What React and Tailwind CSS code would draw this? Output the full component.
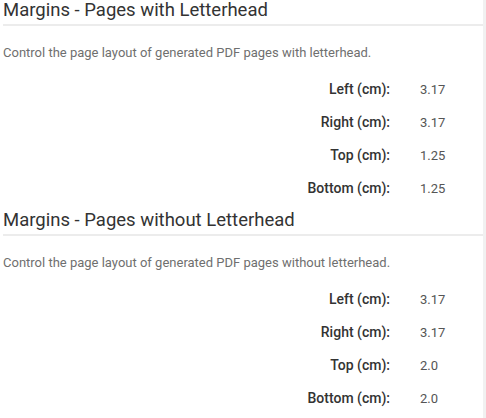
import React from 'react'

const sections = [
  {
    title: 'Margins - Pages with Letterhead',
    desc: 'Control the page layout of generated PDF pages with letterhead.',
    rows: [
      ['Left (cm):', '3.17'],
      ['Right (cm):', '3.17'],
      ['Top (cm):', '1.25'],
      ['Bottom (cm):', '1.25'],
    ],
  },
  {
    title: 'Margins - Pages without Letterhead',
    desc: 'Control the page layout of generated PDF pages without letterhead.',
    rows: [
      ['Left (cm):', '3.17'],
      ['Right (cm):', '3.17'],
      ['Top (cm):', '2.0'],
      ['Bottom (cm):', '2.0'],
    ],
  },
]

function Section({ title, desc, rows }) {
  return (
    <div className="h-[210px]">
      <h2 className="text-[18.5px] leading-[21px] text-[#333] pb-[3px] border-b-2 border-[#ececec]">{title}</h2>
      <p className="mt-[19px] text-[13px] leading-[16px] text-[#6f6f6f]">{desc}</p>
      <div className="mt-[12px]">
        {rows.map(([label, value]) => (
          <div key={label} className="flex items-center h-[33px] text-[13px]">
            <span className="w-[387px] text-right text-[14px] font-medium text-[#333]">{label}</span>
            <span className="ml-[30px] text-[#555]">{value}</span>
          </div>
        ))}
      </div>
    </div>
  )
}

export default function App() {
  return (
    <div className="flex w-[486px] h-[418px] bg-white overflow-hidden" style={{ fontFamily: 'Roboto, "Noto Sans", sans-serif' }}>
      <div className="w-[483px] pl-[3px]">
        {sections.map((s) => (
          <Section key={s.title} {...s} />
        ))}
      </div>
      <div className="flex-1 bg-[#f1f1f1]" />
    </div>
  )
}
